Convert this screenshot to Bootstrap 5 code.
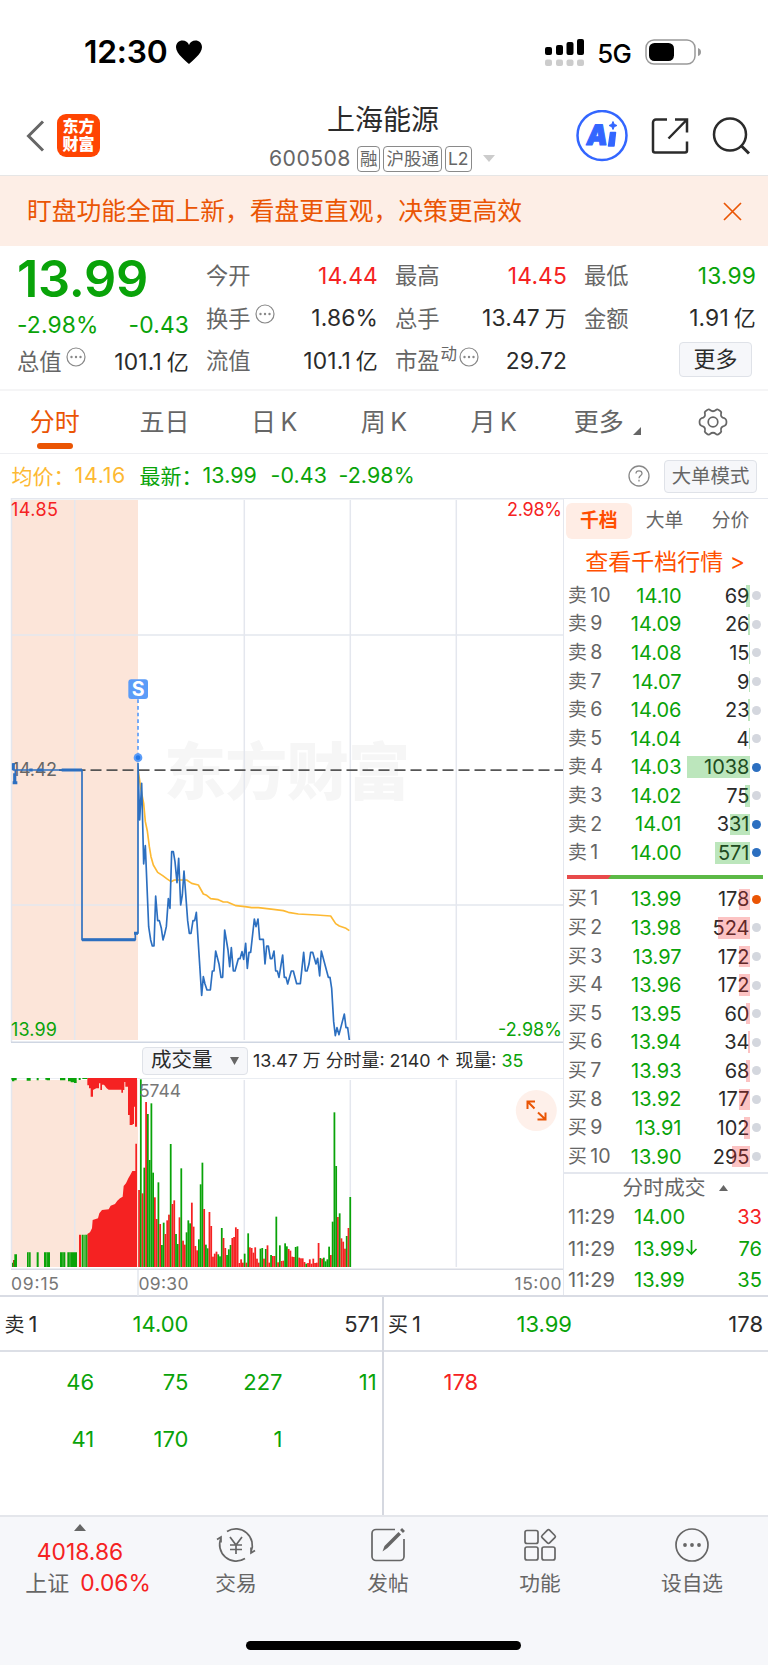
<!DOCTYPE html>
<html lang="zh-CN">
<head>
<meta charset="utf-8">
<meta name="viewport" content="width=device-width, initial-scale=1">
<title>上海能源 600508</title>
<link href="https://cdn.jsdelivr.net/npm/bootstrap@5.3.0/dist/css/bootstrap.min.css" rel="stylesheet">
<style>
:root{--up:#f52222;--down:#09a309;--brand:#ea5504;--ink:#2b2b2b;--soft:#666;--line:#e4e7ee}
body{font-family:Inter,"Noto Sans CJK SC",sans-serif;color:var(--ink);background:#fff;line-height:1;width:768px;height:1665px;overflow:hidden}
svg{display:block;flex:none}
svg text{font-family:Inter,"Noto Sans CJK SC",sans-serif}
.up{color:var(--up)}.down{color:var(--down)}.soft{color:var(--soft)}.brand{color:var(--brand)}.text-ink{color:var(--ink)}
.unit{margin-left:5px}
.status{height:96px;padding:8px 66px 0 84px}
.clock{font-size:31.8px;font-weight:600;letter-spacing:-.2px}
.net{font-size:25.8px;font-weight:500;letter-spacing:-.7px;margin:0 10px 0 12px}
.topbar{height:80px;border-bottom:1px solid #e6e6e6}
.side-l{width:240px;padding-left:26px}
.side-r{width:243px;padding-left:51px}
.logo{width:43px;height:43px;margin-left:12px;border-radius:9px;background:#ff4502;color:#fff;font-size:16px;font-weight:800;line-height:17.5px}
.stock{font-size:28px;height:40px;line-height:41px;padding-left:1px}
.coderow{margin:5.5px 0 0 5px}
.code{font-size:21.2px;letter-spacing:.45px;margin-right:6px}
.tagbox{border:1.4px solid #8a8a8a;border-radius:4px;height:26px;font-size:17.5px;line-height:23.5px;padding:0 2px;margin-right:3px}
.notice{height:70px;background:#fdeee6;font-size:24.75px;padding:0 26px 0 27px}
.quote{height:145px;display:grid;grid-template-columns:repeat(4,172px);column-gap:17px;padding:9px 12px 0 17px;border-bottom:2px solid #f5f5f6;font-size:22.3px}
.quote .cell{height:42.6px;display:flex;align-items:center;justify-content:space-between;white-space:nowrap}
.quote .num{font-size:22.8px;letter-spacing:.15px}
.quote .num .unit{font-size:22px}
.price{font-size:50.5px;font-weight:600;height:47px;line-height:47px;letter-spacing:-.3px}
.mini{margin:-9px 0 0 4.5px}
.dyn{font-size:16.5px;margin:-14px 2px 0 1px}
.morebtn{width:73px;height:35px;border:1.5px solid #dfe2e8;border-radius:4px;background:#f6f7fa;font-size:22px;margin:-4px 4px 0 0}
.tabs{height:63px;border-bottom:1.5px solid #eeeff2;font-size:25px}
.tabs>div{width:14.2857%;position:relative}
.tabs .on:after{content:"";position:absolute;left:37px;bottom:4.5px;width:36px;height:5.5px;border-radius:3px;background:var(--brand)}
.info{height:44px;padding-left:11.5px;font-size:21px}
.info .n{font-size:21.4px;letter-spacing:.1px}
.info .avg.n{letter-spacing:.7px}
.avg{color:#fdb933}
.w1{width:63px}.w2{width:65px}.w3{width:68px}
.modebtn{width:93px;height:33px;border:1.5px solid #dfe2e8;border-radius:4px;background:#f6f7fa;font-size:19.4px;margin-right:11px;padding-top:1px}
.main{height:797px}
.left{width:563px}
.right{width:205px;border-left:1.5px solid var(--line);border-top:1.5px solid var(--line)}
.volhead{height:35px;padding-left:142px;font-size:17.9px}
.volbtn{width:106px;height:28px;border:1.5px solid #dfe2e8;border-radius:4px;background:#f6f7fa;font-size:20.5px;margin-right:5px}
.rtabs{height:41px;padding:4px 0 0 2px;font-size:18.8px}
.rtabs .on{width:65.5px;height:36px;border-radius:6px;background:#ffede5;color:#ff4e00;font-weight:700}
.rtabs .tb{width:66px}
.deep{height:43px;color:#ff5000;font-size:23px;padding:1px 2px 0 0}
.asks{margin-top:-1.5px}
.ord{height:28.59px;padding-left:4px;font-size:20px}
.ord .lv{width:55px;color:var(--soft);font-size:18.8px;white-space:nowrap}
.ord .lv b{font-weight:400;font-size:19.6px;margin-left:3.5px}
.ord .pr{width:58.5px;text-align:right}
.ord .qt{width:68px;height:100%;position:relative;text-align:right}
.ord .qt i{position:absolute;right:0;top:3.5px;height:21.5px;opacity:.27}
.ord .dot{width:9px;height:9px;border-radius:50%;margin-left:2.5px;background:#d4d7de}
.powerbar{height:17.8px;padding:2.5px 0 0 3px}
.deals{border-top:2px solid var(--line);font-size:20.1px;margin-top:1.5px}
.dealhd{height:27.5px;font-size:20.8px;padding-left:18px}
.deal{height:31.3px;padding:0 6px 0 4px}
.deal .t{width:66px;color:var(--soft)}
.book{height:222px;border-top:2px solid #d9dce4;border-bottom:2px solid #e4e6eb;font-size:22px}
.book .sell{width:382px}
.book .buy{width:386px;border-left:2px solid #d5d8e0}
.book .hd{height:55px;border-bottom:2px solid #dcdfe6;padding:1px 3px 0 4.5px}
.book .buy .hd{padding:1px 5px 0 4px}
.book .grid4{display:grid;grid-template-columns:repeat(4,94.2px);grid-auto-rows:57.3px;text-align:right;padding-top:1px}
.book .hl{width:90px;font-size:20px}.book .hl span{font-size:22px}.book .hp{width:94px;text-align:right;margin-right:auto}
.dock{height:148px;background:#f6f7fa;position:relative;padding-top:7px}
.dock .it{width:152px}
.dock .ix{width:160px;font-size:22.8px;line-height:24px}
.dock .lb{font-size:20.7px;margin-top:6px;line-height:24px;color:var(--soft)}
.home{position:absolute;left:246px;bottom:15px;width:275px;height:9px;border-radius:5px;background:#000}
</style>
</head>
<body>
<svg width="0" height="0" class="position-absolute"><defs>
<symbol id="dots" viewBox="0 0 20 20"><circle cx="10" cy="10" r="9" fill="none" stroke="#888" stroke-width="1.2"/><g fill="#888"><circle cx="5.5" cy="10" r="1.2"/><circle cx="10" cy="10" r="1.2"/><circle cx="14.5" cy="10" r="1.2"/></g></symbol>
</defs></svg>

<div class="status d-flex align-items-center text-black">
  <span class="clock">12:30</span>
  <svg style="margin-left:7px" width="28" height="26" viewBox="0 0 28 26"><path d="M14 25C12 23 1 15 1 8.300C1 4 4 1.500 7.500 1.500C10.500 1.500 13 3.200 14 6C15 3.200 17.500 1.500 20.500 1.500C24 1.500 27 4 27 8.300C27 15 16 23 14 25Z"/></svg>
  <svg class="ms-auto" width="40" height="28" viewBox="0 0 40 28"><rect x="0" y="9" width="7" height="8" rx="2"/><rect x="11" y="7" width="7" height="10" rx="2"/><rect x="21.500" y="4" width="7" height="13" rx="2"/><rect x="32" y="1" width="7" height="16" rx="2"/><g fill="#ccc"><rect x="0" y="21.500" width="7" height="6.500" rx="2"/><rect x="11" y="21.500" width="7" height="6.500" rx="2"/><rect x="21.500" y="21.500" width="7" height="6.500" rx="2"/><rect x="32" y="21.500" width="7" height="6.500" rx="2"/></g></svg>
  <span class="net pt-1">5G</span>
  <svg class="ms-1" width="57" height="26" viewBox="0 0 57 26"><rect x="1" y="1" width="49" height="24" rx="8" fill="none" stroke="#999" stroke-width="1.500"/><rect x="4" y="4" width="25" height="18" rx="5.500"/><path d="M53 9q3 1 3 4t-3 4z" fill="#999"/></svg>
</div>

<header class="topbar d-flex">
  <div class="side-l d-flex align-items-center">
    <svg width="19" height="32" viewBox="0 0 19 32"><path d="M17 1.500 2.500 16 17 30.500" fill="none" stroke="#666" stroke-width="3"/></svg>
    <div class="logo d-flex flex-column align-items-center justify-content-center"><span>东方</span><span>财富</span></div>
  </div>
  <div class="flex-fill d-flex flex-column align-items-center pt-1">
    <div class="stock">上海能源</div>
    <div class="coderow d-flex align-items-center align-self-start soft ps-4"><span class="code">600508</span><span class="tagbox">融</span><span class="tagbox">沪股通</span><span class="tagbox">L2</span><svg class="ms-2" width="12" height="7"><path d="M0 0h12l-6 7z" fill="#ccc"/></svg></div>
  </div>
  <div class="side-r d-flex align-items-center">
    <svg width="52" height="52" viewBox="0 0 52 52"><circle cx="26" cy="25.500" r="24.500" fill="none" stroke="#36f" stroke-width="2.500"/><g fill="#36f" stroke="#36f" stroke-linejoin="round"><text x="9.500" y="35.500" font-size="28" font-weight="900" stroke-width="1.200" transform="translate(5 0) skewX(-8)" textLength="21" lengthAdjust="spacingAndGlyphs">A</text><path stroke-width="1.500" d="M34.500 22.500H39.500L38 36H32.500Z"/><path d="M37 11.500l1.200 2.800 2.800 1.200-2.800 1.200-1.200 2.800-1.200-2.800-2.800-1.200 2.800-1.200z"/></g></svg>
    <svg style="margin-left:22.500px" width="38" height="38" viewBox="0 0 38 38"><path d="M16 2.500H5a3 3 0 0 0-3 3v28a2 2 0 0 0 2 2h30a2 2 0 0 0 2-2V24.500M24 2.500h12v13M36 2.500 17.500 21.500" fill="none" stroke="#2b2b2b" stroke-width="2.500"/></svg>
    <svg style="margin-left:22.500px" width="40" height="40" viewBox="0 0 40 40"><circle cx="19" cy="18.500" r="16" fill="none" stroke="#2b2b2b" stroke-width="2.500"/><path d="m30 29.500 8 8" stroke="#2b2b2b" stroke-width="3"/></svg>
  </div>
</header>

<div class="notice brand d-flex align-items-center justify-content-between"><span>盯盘功能全面上新，看盘更直观，决策更高效</span><svg width="19" height="19" viewBox="0 0 19 19"><path d="m1 1 17 17M18 1 1 18" stroke="#ea5504" stroke-width="1.700"/></svg></div>

<section class="quote soft">
  <div>
    <div class="price down">13.99</div>
    <div class="cell num down" style="height:47px"><span>-2.98%</span><span>-0.43</span></div>
    <div class="cell" style="height:26px"><span class="d-flex align-items-center">总值<svg class="mini" width="20" height="20"><use href="#dots"/></svg></span><span class="num text-ink">101.1<span class="unit">亿</span></span></div>
  </div>
  <div>
    <div class="cell"><span>今开</span><span class="num up">14.44</span></div>
    <div class="cell"><span class="d-flex align-items-center">换手<svg class="mini" width="20" height="20"><use href="#dots"/></svg></span><span class="num text-ink">1.86%</span></div>
    <div class="cell"><span>流值</span><span class="num text-ink">101.1<span class="unit">亿</span></span></div>
  </div>
  <div>
    <div class="cell"><span>最高</span><span class="num up">14.45</span></div>
    <div class="cell"><span>总手</span><span class="num text-ink">13.47<span class="unit">万</span></span></div>
    <div class="cell"><span class="d-flex align-items-center">市盈<small class="dyn">动</small><svg class="mini ms-0" width="20" height="20"><use href="#dots"/></svg></span><span class="num text-ink">29.72</span></div>
  </div>
  <div>
    <div class="cell"><span>最低</span><span class="num down">13.99</span></div>
    <div class="cell"><span>金额</span><span class="num text-ink">1.91<span class="unit">亿</span></span></div>
    <div class="cell justify-content-end"><span class="morebtn text-ink d-flex align-items-center justify-content-center">更多</span></div>
  </div>
</section>

<nav class="tabs soft d-flex text-center">
  <div class="on brand d-flex align-items-center justify-content-center">分时</div>
  <div class="d-flex align-items-center justify-content-center">五日</div>
  <div class="d-flex align-items-center justify-content-center">日&#8201;K</div>
  <div class="d-flex align-items-center justify-content-center">周&#8201;K</div>
  <div class="d-flex align-items-center justify-content-center">月&#8201;K</div>
  <div class="d-flex align-items-center justify-content-center ps-2">更多<svg style="margin-left:9px;margin-top:18px" width="8" height="8"><path d="M8 0v8H0z" fill="#666"/></svg></div>
  <div class="d-flex align-items-center justify-content-center"><svg width="30" height="30" viewBox="0 0 30 30" fill="none" stroke="#666" stroke-width="1.700"><path d="M8.500 3.500Q11 1.500 12 3Q15 5.500 18 3Q19 1.500 21.500 3.500Q24 5 23 6.800Q22.500 10.500 26.500 11.200Q28.500 12 28.500 15T26.500 18.800Q22.500 19.500 23 23.200Q24 25 21.500 26.500Q19 28.500 18 27Q15 24.500 12 27Q11 28.500 8.500 26.500Q6 25 7 23.200Q7.500 19.500 3.500 18.800Q1.500 18 1.500 15T3.500 11.200Q7.500 10.500 7 6.800Q6 5 8.500 3.500Z"/><circle cx="15" cy="15" r="4.800"/></svg></div>
</nav>

<div class="info d-flex align-items-center">
  <span class="w1 avg">均价：</span><span class="w2 n avg">14.16</span>
  <span class="w1 down">最新：</span><span class="w3 n down">13.99</span><span class="w3 n down">-0.43</span><span class="n down">-2.98%</span>
  <svg class="ms-auto" style="margin-right:14px" width="22" height="22" viewBox="0 0 22 22"><circle cx="11" cy="11" r="10" fill="none" stroke="#888" stroke-width="1.300"/><path d="M8 8.600Q8 5.800 11 5.800T14 8.600C14 10.500 11 10.800 11 13.300M11 14.800v1.700" fill="none" stroke="#888" stroke-width="1.300"/></svg>
  <span class="modebtn soft d-flex align-items-center justify-content-center">大单模式</span>
</div>

<main class="main d-flex">
  <div class="left">
    <svg width="563" height="545" viewBox="0 498 563 545">
      <rect x="11.500" y="500" width="126.500" height="540" fill="#fce5d9"/>
      <text x="164" y="795" font-size="62" font-weight="900" fill="#f6f6f6" textLength="246">东方财富</text>
      <g stroke="#e4e7ee" stroke-width="1.500" fill="none"><path d="M11 498.700H563M11.500 498V1042M74.700 500V1040M244.300 500V1040M350.300 500V1040M456.300 500V1040M12 635H563M12 905H563"/><path stroke="#cfd6e2" d="M11 1042.300H563"/></g>
      <text x="11" y="516" font-size="18" fill="#f52222" textLength="47">14.85</text>
      <text x="507" y="516" font-size="18" fill="#f52222" textLength="55">2.98%</text>
      <text x="11" y="1035.700" font-size="18" fill="#09a309" textLength="46">13.99</text>
      <text x="498" y="1035.700" font-size="18" fill="#09a309" textLength="64">-2.98%</text>
      <path d="M59 770.200H563" stroke="#555" stroke-width="1.700" stroke-dasharray="11 5" stroke-dashoffset="0.500"/>
      <text x="12" y="776" font-size="18" fill="#666" textLength="45">14.42</text>
      <g transform="translate(0 660) scale(.33333)" fill="none" stroke-linejoin="round">
        <path stroke="#fdb933" stroke-width="5" d="M414 330 425 400 431 430 436 485 442 513 448 560 453 590 460 615 473 637 488 647 500 656 513 665 523 660H560L575 670 595 675 610 702 620 706 632 716 655 719 670 726H682L708 737 735 740 755 743H775L820 748 850 752 865 757 895 762 950 765 992 768 1007 791 1018 798 1038 805 1048 812"/>
        <path stroke="#2c6fc0" stroke-width="5" d="M40 310V330H46V370M46 330H246V839H406V820H414V310L419 480 425 370 431 612 436 557 446 800 452 840 457 858H462L467 708 473 782H478L484 805 489 840 494 822 499 800 505 716 510 745 515 575H520L525 605 531 668 536 595 542 735 547 705 552 633 563 782 568 820H573L579 782H584L589 757 605 1006 610 950 615 972 621 990H631L637 933H642L647 873 657 912 663 952H668L674 810 684 870 689 920 694 863 700 933H705L715 896H720L726 875 731 898 737 850 742 925 747 877H752L763 777 768 800 774 777 779 838H790L795 912 800 858H805L811 896H816L822 873 827 933H832L837 952 848 885 853 952H858L863 972 874 933H880L890 971H901L911 877 916 933H921L927 912 932 877H938L948 912 953 895 959 948 964 873 980 933 985 952H990L995 985 1001 1085 1006 1127 1011 1103 1017 1124 1027 1085 1033 1062 1038 1103H1043L1048 1140"/>
        <path stroke="#2c6fc0" stroke-width="9" d="M246 839H406M402 820H414M44 340V373M38 368H52M88 330H98M112 330H128M185 330H246M40 310V330"/>
        <path stroke="#5b9cf8" stroke-width="5" stroke-dasharray="11 9" d="M414 118V285"/>
        <circle cx="414" cy="293" r="13" fill="#5b9cf8"/><circle cx="414" cy="293" r="7" fill="#2277e8"/>
        <rect x="385" y="58" width="59" height="59" rx="9" fill="#5b9cf8"/>
      </g>
      <text x="138.200" y="696" font-size="19.500" font-weight="700" fill="#fff" text-anchor="middle">S</text>
    </svg>
    <div class="volhead d-flex align-items-center"><span class="volbtn d-flex align-items-center justify-content-between ps-2 pe-2">成交量<svg width="9" height="8"><path d="M0 0h9L4.500 8z" fill="#666"/></svg></span><span class="text-nowrap">13.47<span class="unit">万</span> 分时量: 2140 ↑ 现量: <span class="down">35</span></span></div>
    <svg width="563" height="218" viewBox="0 1078 563 218">
      <rect x="11.500" y="1080" width="126.500" height="187" fill="#fce5d9"/>
      <g stroke="#e4e7ee" stroke-width="1.500"><path d="M11 1078H563M11.500 1078V1267M74.700 1080V1267M244.300 1080V1267M350.300 1080V1267M456.300 1080V1267M138 1270V1296"/><path stroke="#d9dce4" d="M11 1269.300H563"/></g>
      <g transform="translate(0 1040) scale(.33333)">
        <path fill="#f52222" d="M262 681V582L270 577 276 565 278 540 294 535 298 520 306 510 326 508 332 497 345 492 352 482 360 475 368 470 371 438 378 430 385 415 392 403 397 393H406V311H411V681ZM262 113H411V260H405V200H402V252H398V255H389V225H384V140H376V126H373V150H369V158H364V149H326L320 145 312 134H306V150H301V130H297V145H289L279 150V170H272V145H267V136H262ZM237 584H243V681H237Z"/>
        <path fill="#09a309" d="M36 681V668H39V660H43V643H51V681ZM81 637H92V681H81ZM110 637H116V681H110ZM132 637H150V681H132ZM180 637H196V681H180ZM202 637H231V681H202ZM245 584H251V681H245ZM253 584H262V681H253ZM34 113H50V121H43V124H36V119H34ZM80 113H92V122H80ZM110 113H116V121H110ZM132 113H136V119H140V121H150V113ZM180 113V121H196V113ZM204 113V124H212V127H222V129H230V113ZM236 113H242V120H236ZM247 113H262V117H247Z"/>
        <path stroke="#fce5d9" stroke-width="1" d="M86 637V681M140 637V681M189 637V681M210 637V681M257 584V681"/>
        <path fill="#f52222" opacity=".6" d="M39 660h3v21h-3z"/>
        <g id="vol"></g>
      </g>
      <g fill="#777" font-size="17.500"><text x="139" y="1097" textLength="42">5744</text><text x="11" y="1289.700" textLength="48">09:15</text><text x="138.500" y="1289.700" textLength="50">09:30</text><text x="514.500" y="1289.700" textLength="47">15:00</text></g>
      <circle cx="536.300" cy="1110.500" r="20.500" fill="#fef0ea"/>
      <path d="M527.500 1109V1101.500H535M528 1102 534.500 1108.500M545.500 1112.500V1119.500H537.500M545 1119 538 1112.500" fill="none" stroke="#ea5504" stroke-width="2"/>
    </svg>
  </div>

  <div class="right">
    <div class="rtabs d-flex soft"><span class="on d-flex align-items-center justify-content-center">千档</span><span class="tb d-flex align-items-center justify-content-center">大单</span><span class="tb d-flex align-items-center justify-content-center">分价</span></div>
    <div class="deep d-flex align-items-center justify-content-center">查看千档行情&nbsp;&gt;</div>
    <div id="asks" class="asks"></div>
    <div class="powerbar d-flex align-items-center"><svg width="196" height="4"><path fill="#5cb946" d="M40 0H196V4H40z"/><path fill="#e84a4a" d="M0 0H44L41 4H0z"/></svg></div>
    <div id="bids"></div>
    <div class="deals">
      <div class="dealhd d-flex align-items-center justify-content-center soft">分时成交<svg style="margin-left:13px" width="9" height="6"><path d="M0 6h9L4.500 0z" fill="#666"/></svg></div>
      <div class="deal d-flex align-items-center"><span class="t">11:29</span><span class="down">14.00</span><span class="up ms-auto">33</span></div>
      <div class="deal d-flex align-items-center"><span class="t">11:29</span><span class="down d-flex">13.99<svg width="13" height="17" viewBox="0 0 13 17"><path d="M6.500 1V15M1.500 10l5 5 5-5" fill="none" stroke="#09a309" stroke-width="1.700"/></svg></span><span class="down ms-auto">76</span></div>
      <div class="deal d-flex align-items-center"><span class="t">11:29</span><span class="down">13.99</span><span class="down ms-auto">35</span></div>
    </div>
  </div>
</main>

<section class="book d-flex">
  <div class="sell">
    <div class="hd d-flex align-items-center justify-content-between"><span class="hl">卖<span class="ms-1">1</span></span><span class="hp down">14.00</span><span>571</span></div>
    <div class="grid4 down align-items-center"><span>46</span><span>75</span><span>227</span><span>11</span><span>41</span><span>170</span><span>1</span></div>
  </div>
  <div class="buy">
    <div class="hd d-flex align-items-center justify-content-between"><span class="hl">买<span class="ms-1">1</span></span><span class="hp down">13.99</span><span>178</span></div>
    <div class="grid4 up align-items-center"><span>178</span></div>
  </div>
</section>

<footer class="dock">
  <div class="d-flex soft">
    <div class="ix d-flex flex-column align-items-center">
      <svg width="12" height="8"><path d="M0 7h12L6 0z" fill="#666"/></svg>
      <span class="up" style="margin-top:8px">4018.86</span>
      <span class="d-flex ps-3" style="margin-top:7px"><span style="font-size:22px">上证</span><span class="up" style="margin-left:11px">0.06%</span></span>
    </div>
    <div class="it d-flex flex-column align-items-center">
      <svg width="40" height="42" viewBox="-20 -21 40 42" fill="none" stroke="#666" stroke-width="1.700"><path d="M-9 -13.500A16.500 16.500 0 0 1 15 7M9 13.500A16.500 16.500 0 0 1 -15 -7M-19 -5.500-15 -8V-2.500M19 5.500 15 8V2.500M-6 -8 0 0 6 -8M0 0V9M-6 0H6M-6 4.500H6"/></svg>
      <span class="lb">交易</span></div>
    <div class="it d-flex flex-column align-items-center">
      <svg width="40" height="42" viewBox="-20 -21 40 42" fill="none" stroke="#666" stroke-width="1.700"><path d="M7 -15.500H-12a4 4 0 0 0-4 4V11.500a4 4 0 0 0 4 4H12a4 4 0 0 0 4-4V-6"/><path fill="#666" stroke="none" d="M-5.500 6.500-3.500 1 10.500 -13 13 -10.500-.500 3Z"/><path d="M13.500 -13.500 15.500 -15.500" stroke-width="4"/></svg>
      <span class="lb">发帖</span></div>
    <div class="it d-flex flex-column align-items-center">
      <svg width="40" height="42" viewBox="-20 -21 40 42" fill="none" stroke="#666" stroke-width="1.700"><rect x="-15" y="-14.500" width="13" height="13" rx="2"/><rect x="-15" y="2" width="13" height="13" rx="2"/><rect x="2" y="2" width="13" height="13" rx="2"/><rect x="3.300" y="-13.700" width="10.500" height="10.500" rx="1.500" transform="rotate(45 8.500 -8.500)"/></svg>
      <span class="lb">功能</span></div>
    <div class="it d-flex flex-column align-items-center">
      <svg width="40" height="42" viewBox="-20 -21 40 42"><circle r="16" fill="none" stroke="#666" stroke-width="1.700"/><g fill="#666"><circle cx="-7" r="1.900"/><circle r="1.900"/><circle cx="7" r="1.900"/></g></svg>
      <span class="lb">设自选</span></div>
  </div>
  <div class="home"></div>
</footer>

<script src="https://cdn.jsdelivr.net/npm/bootstrap@5.3.0/dist/js/bootstrap.bundle.min.js"></script>
<script>
// order book: level, price, quantity, bar width, dot colour
const asks=[[10,'14.10',69,4],[9,'14.09',26,2],[8,'14.08',15,1],[7,'14.07',9,1],[6,'14.06',23,1.5],[5,'14.04',4,.5],[4,'14.03',1038,62.5,'#2c6fc0'],[3,'14.02',75,4.5],[2,'14.01',331,20,'#2c6fc0'],[1,'14.00',571,34.5,'#2c6fc0']];
const bids=[[1,'13.99',178,11,'#ea5504'],[2,'13.98',524,32],[3,'13.97',172,10.5],[4,'13.96',172,10.5],[5,'13.95',60,3.5],[6,'13.94',34,2],[7,'13.93',68,4],[8,'13.92',177,11],[9,'13.91',102,6],[10,'13.90',295,18]];
const row=(n,c)=>r=>`<div class="ord d-flex align-items-center"><span class="lv">${n}<b>${r[0]}</b></span><span class="pr down">${r[1]}</span><span class="qt d-flex align-items-center justify-content-end">${r[2]}<i style="width:${r[3]}px;background:${c}"></i></span><span class="dot"${r[4]?` style="background:${r[4]}"`:''}></span></div>`;
document.getElementById('asks').innerHTML=asks.map(row('卖','#09a309')).join('');
document.getElementById('bids').innerHTML=bids.map(row('买','#f52222')).join('');
// minute volume: direction and top edge of each bar
const v='r450 g118 r460 g383 r186 g222 g360 g190 g398 r472 r537 g427 r552 g615 g548 r582 r541 r524 g312 r492 r481 g582 g612 r532 g385 r602 r614 g577 g541 g550 r488 r560 r618 r631 g598 g433 g368 r507 g614 g625 r516 r558 r650 r641 r635 g643 g649 g564 r594 r624 g645 g628 g615 r594 r591 r562 r567 r669 r658 r668 g641 r668 g580 r622 r624 r638 r622 r656 r668 g626 g624 r656 g627 r616 r668 g645 r648 r648 g530 r667 g616 r663 r662 g610 g619 r627 r632 r650 r651 g621 g619 r653 r655 r655 r666 g671 r669 r658 r671 r656 r669 r668 r609 g654 r656 g653 g664 g658 g620 r645 g545 g217 g378 r531 g520 r595 r605 r626 g588 r564 g471'.split(' ');
document.getElementById('vol').innerHTML=v.map((s,i)=>`<rect x="${(414.5+5.28*i).toFixed(1)}" y="${s.slice(1)}" width="5.3" height="${681-s.slice(1)}" fill="${s[0]=='r'?'#f52222':'#09a309'}"/>`).join('');
</script>
</body>
</html>
